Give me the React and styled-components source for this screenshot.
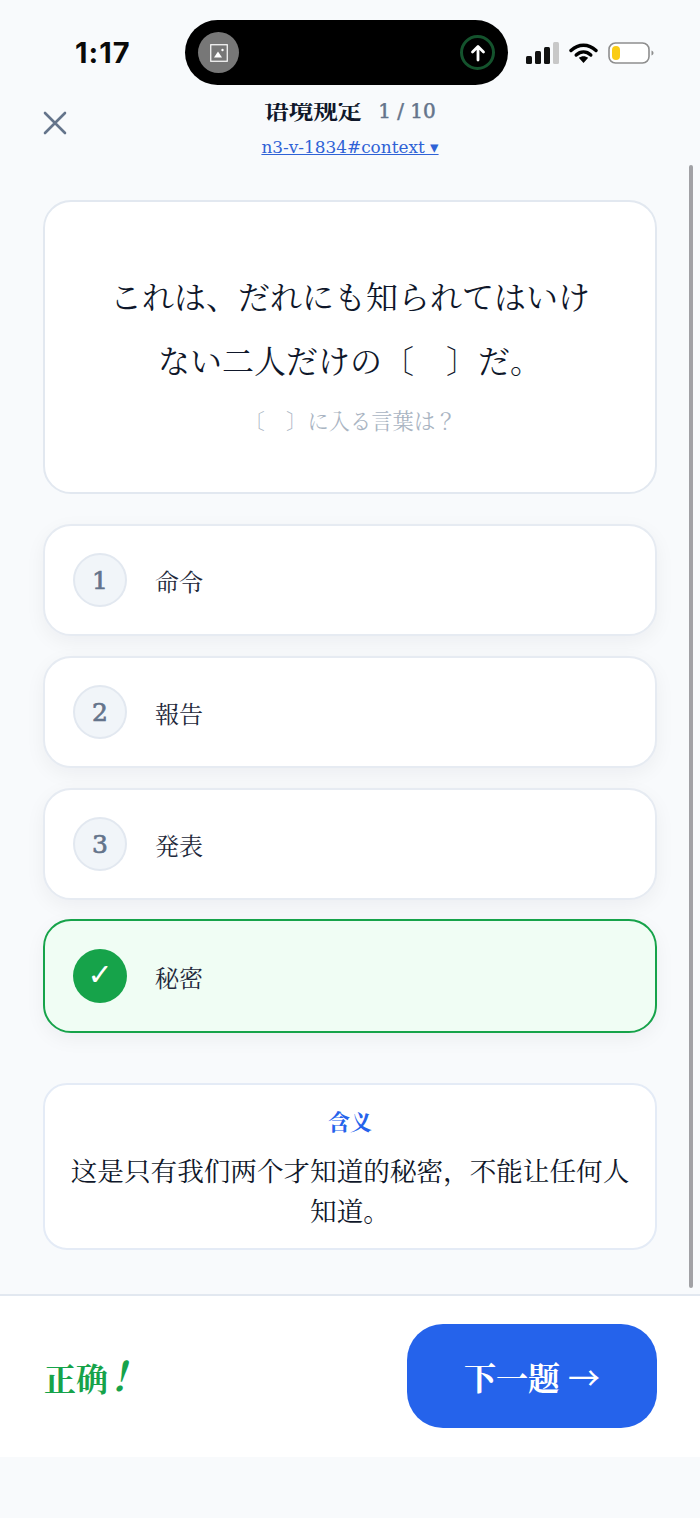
import React from "react";
import styled, { createGlobalStyle } from "styled-components";

const SERIF = `"Liberation Serif", "Noto Serif CJK JP", "Noto Serif CJK SC", serif`;
const LATIN = `"DejaVu Serif", "Liberation Serif", serif`;

const Global = createGlobalStyle`
  html, body {
    margin: 0;
    padding: 0;
    background: #f8fafc;
  }
  * {
    box-sizing: border-box;
  }
`;

const Page = styled.div`
  width: 700px;
  height: 1518px;
  display: flex;
  flex-direction: column;
  background: #f8fafc;
  font-family: ${SERIF};
  color: #0f172a;
  overflow: hidden;
`;

const StatusBar = styled.div`
  height: 103px;
  flex: none;
  display: flex;
  align-items: flex-start;
  padding: 20px 0 0 75px;
`;

const Time = styled.div`
  width: 110px;
  height: 65px;
  flex: none;
  line-height: 65px;
  font-family: Inter, "Liberation Sans", sans-serif;
  font-weight: 700;
  font-size: 29px;
  letter-spacing: 1px;
  color: #0a0a0a;
`;

const Island = styled.div`
  width: 323px;
  height: 65px;
  flex: none;
  border-radius: 33px;
  background: #000;
  display: flex;
  align-items: center;
  justify-content: space-between;
  padding: 0 13px;
`;

const IslandThumb = styled.div`
  width: 41px;
  height: 41px;
  border-radius: 50%;
  background: #777;
  display: flex;
  align-items: center;
  justify-content: center;
`;

const IslandProgress = styled.div`
  width: 35px;
  height: 35px;
  border-radius: 50%;
  border: 3px solid #14532d;
  display: flex;
  align-items: center;
  justify-content: center;
`;

const StatusIcons = styled.div`
  height: 65px;
  flex: none;
  margin-left: 18px;
  display: flex;
  align-items: center;
  gap: 10px;
`;

const Header = styled.header`
  height: 62px;
  flex: none;
  position: relative;
  overflow: hidden;
  display: flex;
  flex-direction: column;
  align-items: center;
`;

const CloseButton = styled.div`
  position: absolute;
  left: 43px;
  top: 8px;
  width: 24px;
  height: 24px;
`;

const TitleRow = styled.div`
  margin-top: -8px;
  height: 32px;
  line-height: 32px;
  display: flex;
  gap: 16px;
  font-size: 24.5px;
  font-weight: 700;
  white-space: nowrap;
`;

const Counter = styled.span`
  color: #64748b;
  font-family: ${LATIN};
  font-size: 20px;
  font-weight: 400;
  -webkit-text-stroke: 0.5px #64748b;
`;

const SourceLink = styled.a`
  margin-top: 8px;
  font-family: ${LATIN};
  font-size: 16.9px;
  line-height: 24px;
  color: #2f62d6;
  text-decoration: underline;
`;

const Scroll = styled.main`
  flex: 1;
  position: relative;
  padding: 35px 43px 0;
  display: flex;
  flex-direction: column;
`;

const Thumb = styled.div`
  position: absolute;
  right: 7px;
  top: 0;
  bottom: 6px;
  width: 4px;
  border-radius: 2px;
  background: #a1a1a5;
`;

const Hero = styled.section`
  height: 294px;
  background: #fff;
  border: 2px solid #e2e8f0;
  border-radius: 28px;
  display: flex;
  flex-direction: column;
  align-items: center;
  padding: 64px 40px 0;
`;

const Sentence = styled.div`
  width: 480px;
  text-align: center;
  font-size: 32px;
  line-height: 64px;
  color: #0f172a;
`;

const Hint = styled.div`
  margin-top: 13px;
  font-size: 21.3px;
  line-height: 30px;
  color: #a9b4c2;
`;

const Options = styled.div`
  margin-top: 30px;
  display: flex;
  flex-direction: column;
  gap: 20px;
`;

const Option = styled.div`
  height: ${(p) => (p.$correct ? "114px" : "112px")};
  margin-top: ${(p) => (p.$correct ? "-1px" : "0")};
  display: flex;
  align-items: center;
  gap: 28px;
  padding: 0 28px;
  border-radius: 28px;
  border: 2px solid ${(p) => (p.$correct ? "#16a34a" : "#e6ebf2")};
  background: ${(p) => (p.$correct ? "#f0fdf4" : "#fff")};
  box-shadow: 0 6px 20px rgba(15, 23, 42, 0.05);
`;

const Badge = styled.div`
  width: 54px;
  height: 54px;
  flex: none;
  border-radius: 50%;
  display: flex;
  align-items: center;
  justify-content: center;
  padding-bottom: ${(p) => (p.$correct ? "3px" : "0")};
  font-size: ${(p) => (p.$correct ? "30px" : "25px")};
  font-weight: ${(p) => (p.$correct ? 700 : 400)};
  font-family: ${(p) => (p.$correct ? `"DejaVu Sans", sans-serif` : LATIN)};
  color: ${(p) => (p.$correct ? "#fff" : "#64748b")};
  -webkit-text-stroke: ${(p) => (p.$correct ? "0" : "0.7px #64748b")};
  background: ${(p) => (p.$correct ? "#16a34a" : "#f1f5f9")};
  border: ${(p) => (p.$correct ? "none" : "2px solid #e2e8f0")};
`;

const OptionLabel = styled.div`
  font-size: 24px;
  color: #1e293b;
`;

const Meaning = styled.section`
  margin-top: 50px;
  height: 167px;
  padding: 23px 24px 0;
  background: #fff;
  border: 2px solid #e4ebf6;
  border-radius: 24px;
  text-align: center;
`;

const MeaningTitle = styled.div`
  font-size: 22px;
  line-height: 30px;
  font-weight: 700;
  color: #2563eb;
`;

const MeaningBody = styled.div`
  margin-top: 14px;
  font-size: 26.6px;
  line-height: 40px;
  color: #0f172a;
`;

const Footer = styled.footer`
  height: 163px;
  flex: none;
  margin-bottom: 61px;
  background: #fff;
  border-top: 2px solid #e2e8f0;
  padding: 0 43px 0 44px;
  display: flex;
  align-items: center;
  justify-content: space-between;
`;

const Verdict = styled.div`
  font-size: 32px;
  font-weight: 700;
  color: #16a34a;
  em {
    font-size: 40px;
    line-height: 1;
    margin-left: -9px;
  }
`;

const NextButton = styled.button`
  width: 250px;
  height: 104px;
  margin-top: -2px;
  border: none;
  border-radius: 36px;
  background: #2563eb;
  color: #fff;
  font-family: ${SERIF};
  font-size: 32px;
  font-weight: 700;
  span {
    font-family: "Noto Sans CJK SC", sans-serif;
    font-weight: 400;
  }
`;

const options = [
  { n: "1", label: "命令" },
  { n: "2", label: "報告" },
  { n: "3", label: "発表" },
  { n: "✓", label: "秘密", correct: true },
];

const App = () => {
  return (
    <Page>
      <Global />
      <StatusBar>
        <Time>1:17</Time>
        <Island>
          <IslandThumb>
            <svg width="18" height="18" viewBox="0 0 18 18">
              <rect x="0.75" y="0.75" width="16.5" height="16.5" fill="none" stroke="#fff" strokeWidth="1.2" />
              <path d="M4 13.5 8 7.5l4 6z" fill="#fff" />
              <circle cx="12.5" cy="6" r="1.2" fill="#fff" />
            </svg>
          </IslandThumb>
          <IslandProgress>
            <svg width="16" height="18" viewBox="0 0 16 18">
              <path d="M8 16V3M2.5 8 8 2.5 13.5 8" fill="none" stroke="#fff" strokeWidth="2.8" strokeLinecap="round" strokeLinejoin="round" />
            </svg>
          </IslandProgress>
        </Island>
        <StatusIcons>
          <svg width="33" height="22" viewBox="0 0 33 22">
            <rect x="0" y="14" width="6" height="8" rx="1.5" fill="#111" />
            <rect x="9" y="9" width="6" height="13" rx="1.5" fill="#111" />
            <rect x="18" y="5" width="6" height="17" rx="1.5" fill="#111" />
            <rect x="27" y="0" width="6" height="22" rx="1.5" fill="#c8c8c8" />
          </svg>
          <svg width="29" height="22" viewBox="0 0 29 22">
            <path d="M2 8.5C9.5 1.5 19.5 1.5 27 8.5" fill="none" stroke="#000" strokeWidth="3.4" strokeLinecap="round" />
            <path d="M7.2 13c4.4-4 10.2-4 14.6 0" fill="none" stroke="#000" strokeWidth="3.4" strokeLinecap="round" />
            <path d="M9.8 15.8 14.5 21l4.7-5.2c-2.8-2.2-6.6-2.2-9.4 0z" fill="#000" />
          </svg>
          <svg width="46" height="22" viewBox="0 0 46 22">
            <rect x="1" y="1" width="40" height="20" rx="6.5" fill="#fff" stroke="#8e8e8e" strokeWidth="1.6" />
            <rect x="4" y="4" width="8" height="14" rx="4" fill="#facc15" />
            <path d="M43.5 8.5c1.4.5 2 1.4 2 2.5s-.6 2-2 2.5z" fill="#8e8e8e" />
          </svg>
        </StatusIcons>
      </StatusBar>

      <Header>
        <CloseButton>
          <svg width="24" height="24" viewBox="0 0 24 24">
            <path d="M2 2l20 20M22 2 2 22" stroke="#64748b" strokeWidth="2.6" strokeLinecap="round" />
          </svg>
        </CloseButton>
        <TitleRow>
          <span>语境规定</span>
          <Counter>1 / 10</Counter>
        </TitleRow>
        <SourceLink href="#">n3-v-1834#context ▾</SourceLink>
      </Header>

      <Scroll>
        <Thumb />
        <Hero>
          <Sentence>これは、だれにも知られてはいけない二人だけの〔　〕だ。</Sentence>
          <Hint>〔　〕に入る言葉は？</Hint>
        </Hero>
        <Options>
          {options.map((o) => (
            <Option key={o.label} $correct={o.correct}>
              <Badge $correct={o.correct}>{o.n}</Badge>
              <OptionLabel>{o.label}</OptionLabel>
            </Option>
          ))}
        </Options>
        <Meaning>
          <MeaningTitle>含义</MeaningTitle>
          <MeaningBody>这是只有我们两个才知道的秘密，不能让任何人知道。</MeaningBody>
        </Meaning>
      </Scroll>

      <Footer>
        <Verdict>
          正确<em>！</em>
        </Verdict>
        <NextButton>
          下一题 <span>→</span>
        </NextButton>
      </Footer>
    </Page>
  );
};

export default App;
